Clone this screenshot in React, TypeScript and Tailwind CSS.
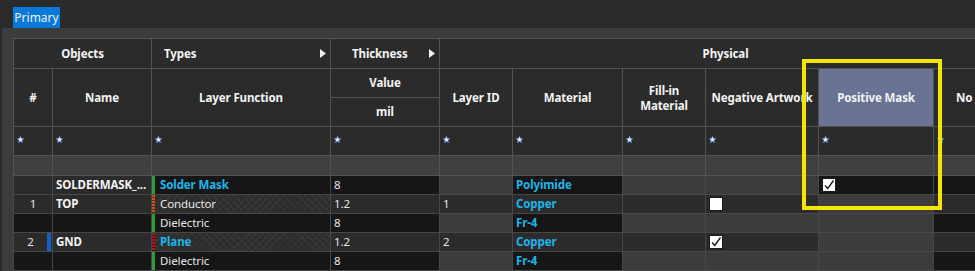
import React from "react";

const font = "font-['Noto_Sans',sans-serif]";

const cellBg: Record<string, string> = {
  dk: "bg-[#161616]",
  md: "bg-[#2b2b2b]",
  ro: "bg-[#3c3c3c]",
  hx: "bg-[#2b2b2b] [background-image:repeating-linear-gradient(45deg,#393939_0_1px,transparent_1px_5px),repeating-linear-gradient(-45deg,#393939_0_1px,transparent_1px_5px)]",
};

const Arrow = () => (
  <svg width="6" height="9" viewBox="0 0 6 9" className="shrink-0">
    <path d="M0 0 L6 4.5 L0 9 Z" fill="#f2f2f2" />
  </svg>
);

const Star = () => (
  <svg width="7" height="7" viewBox="0 0 10 10">
    <path
      d="M5 0.5 L6.3 3.6 L9.6 3.8 L7 6 L7.9 9.3 L5 7.5 L2.1 9.3 L3 6 L0.4 3.8 L3.7 3.6 Z"
      fill="#f4f6ff"
      stroke="#5b8fd8"
      strokeWidth="1"
    />
  </svg>
);

const Check = ({ on }: { on: boolean }) => (
  <div className="w-[14px] h-[14px] bg-white border border-[#1a1a1a] flex items-center justify-center">
    {on && (
      <svg width="12" height="12" viewBox="0 0 12 12">
        <path d="M2 6.5 L4.8 9.5 L10.5 1.5" fill="none" stroke="#111" strokeWidth="1.3" />
      </svg>
    )}
  </div>
);

type Row = {
  num: string;
  numBg: string;
  name: string;
  nameBg: string;
  bar?: "none" | "blue";
  lf: string;
  lfBold: boolean;
  lfBg: string;
  lfBar: "green" | "orange" | "red";
  th: string;
  thBg: string;
  lid: string;
  lidBg: string;
  mat: string;
  matBg: string;
  fillBg: string;
  neg: "none" | "off" | "on";
  negBg: string;
  pos: "none" | "on";
  posBg: string;
  noBg: string;
};

const rows: Row[] = [
  { num: "", numBg: "md", name: "SOLDERMASK_...", nameBg: "md", lf: "Solder Mask", lfBold: true, lfBg: "dk", lfBar: "green", th: "8", thBg: "dk", lid: "", lidBg: "ro", mat: "Polyimide", matBg: "dk", fillBg: "ro", neg: "none", negBg: "ro", pos: "on", posBg: "dk", noBg: "dk" },
  { num: "1", numBg: "md", name: "TOP", nameBg: "md", lf: "Conductor", lfBold: false, lfBg: "hx", lfBar: "orange", th: "1.2", thBg: "md", lid: "1", lidBg: "md", mat: "Copper", matBg: "md", fillBg: "md", neg: "off", negBg: "md", pos: "none", posBg: "ro", noBg: "md" },
  { num: "", numBg: "dk", name: "", nameBg: "dk", lf: "Dielectric", lfBold: false, lfBg: "dk", lfBar: "green", th: "8", thBg: "dk", lid: "", lidBg: "ro", mat: "Fr-4", matBg: "dk", fillBg: "ro", neg: "none", negBg: "ro", pos: "none", posBg: "ro", noBg: "dk" },
  { num: "2", numBg: "md", name: "GND", nameBg: "md", bar: "blue", lf: "Plane", lfBold: true, lfBg: "hx", lfBar: "red", th: "1.2", thBg: "md", lid: "2", lidBg: "md", mat: "Copper", matBg: "md", fillBg: "md", neg: "on", negBg: "md", pos: "none", posBg: "ro", noBg: "md" },
  { num: "", numBg: "dk", name: "", nameBg: "dk", lf: "Dielectric", lfBold: false, lfBg: "dk", lfBar: "green", th: "8", thBg: "dk", lid: "", lidBg: "ro", mat: "Fr-4", matBg: "dk", fillBg: "ro", neg: "none", negBg: "ro", pos: "none", posBg: "ro", noBg: "dk" },
];

const barClass: Record<string, string> = {
  green: "bg-[#2a9d3c]",
  orange: "[background-image:repeating-linear-gradient(180deg,#c4581c_0_2px,#5a2a10_2px_3px)]",
  red: "[background-image:repeating-linear-gradient(180deg,#b3161b_0_2px,#4a0a0c_2px_3px)]",
};

const hd = "border border-[#545454] bg-[#2b2b2b] text-[#f4f4f4] font-bold text-center align-middle p-0";
const bd = "border border-[#474747] p-0 align-middle";
const cyan = "text-[#1fb5e8] font-bold";

export default function App() {
  return (
    <div className={`w-[975px] h-[271px] overflow-hidden bg-[#2b2b2b] ${font} text-[11.5px] tracking-[-0.1px] leading-none`}>
      <div className="h-[28px] pl-[13px] pt-[7px]">
        <div className="w-[47px] h-[21px] bg-[#0a78d6] text-[#e9f2ff] text-[12px] tracking-normal flex items-center justify-center">
          Primary
        </div>
      </div>
      <div className="ml-[2px] h-[243px] bg-[#3c3c3c] pl-[11px] pt-[10px]">
        <div className="relative w-[962px] h-[233px] overflow-hidden">
          <table className="table-fixed border-collapse w-[998px]">
            <colgroup>
              <col className="w-[39px]" />
              <col className="w-[99px]" />
              <col className="w-[179px]" />
              <col className="w-[109px]" />
              <col className="w-[73px]" />
              <col className="w-[110px]" />
              <col className="w-[83px]" />
              <col className="w-[113px]" />
              <col className="w-[115px]" />
              <col className="w-[78px]" />
            </colgroup>
            <thead>
              <tr className="h-[30px]">
                <th colSpan={2} className={hd}>Objects</th>
                <th className={hd}>
                  <div className="flex items-center justify-between pl-[12px] pr-[4px]">
                    <span>Types</span>
                    <Arrow />
                  </div>
                </th>
                <th className={hd}>
                  <div className="flex items-center pl-[21px] pr-[4px]">
                    <span className="flex-1 text-left">Thickness</span>
                    <Arrow />
                  </div>
                </th>
                <th colSpan={6} className={hd}>Physical</th>
              </tr>
              <tr className="h-[29px]">
                <th rowSpan={2} className={hd}>#</th>
                <th rowSpan={2} className={hd}>Name</th>
                <th rowSpan={2} className={hd}>Layer Function</th>
                <th className={hd}>Value</th>
                <th rowSpan={2} className={hd}>Layer ID</th>
                <th rowSpan={2} className={hd}>Material</th>
                <th rowSpan={2} className={`${hd} leading-[15px]`}>Fill-in<br />Material</th>
                <th rowSpan={2} className={`${hd} whitespace-nowrap`}>Negative Artwork</th>
                <th rowSpan={2} className={`${hd} bg-[#6b7394]`}>Positive Mask</th>
                <th rowSpan={2} className={`${hd} text-left pl-[22px]`}>No</th>
              </tr>
              <tr className="h-[29px]">
                <th className={hd}>mil</th>
              </tr>
            </thead>
            <tbody>
              <tr className="h-[29px]">
                {Array.from({ length: 10 }).map((_, i) => (
                  <td key={i} className={`${bd} border-[#545454] bg-[#2b2b2b] align-top`}>
                    <div className="pl-[3px] pt-[9px] flex">
                      <Star />
                    </div>
                  </td>
                ))}
              </tr>
              <tr className="h-[20px]">
                {Array.from({ length: 10 }).map((_, i) => (
                  <td key={i} className={`${bd} border-[#545454] bg-[#404040]`} />
                ))}
              </tr>
              {rows.map((r, i) => (
                <tr key={i} className="h-[19px]">
                  <td className={`${bd} ${cellBg[r.numBg]}`}>
                    <div className="flex items-stretch h-[18px]">
                      <span className="flex-1 flex items-center justify-center text-[#e6e6e6]">{r.num}</span>
                      {r.bar === "blue" ? <div className="w-[4px] bg-[#1560c4] mr-[1px]" /> : null}
                    </div>
                  </td>
                  <td className={`${bd} ${cellBg[r.nameBg]} pl-[3px] text-[#f4f4f4] font-bold whitespace-nowrap`}>{r.name}</td>
                  <td className={`${bd} ${cellBg[r.lfBg]}`}>
                    <div className="flex items-stretch h-[18px]">
                      <div className={`w-[3px] ${barClass[r.lfBar]}`} />
                      <span className={`flex items-center pl-[5px] ${r.lfBold ? cyan : "text-[#e6e6e6]"}`}>{r.lf}</span>
                    </div>
                  </td>
                  <td className={`${bd} ${cellBg[r.thBg]} pl-[3px] text-[#e6e6e6]`}>{r.th}</td>
                  <td className={`${bd} ${cellBg[r.lidBg]} pl-[3px] text-[#e6e6e6]`}>{r.lid}</td>
                  <td className={`${bd} ${cellBg[r.matBg]} pl-[3px] ${cyan}`}>{r.mat}</td>
                  <td className={`${bd} ${cellBg[r.fillBg]}`} />
                  <td className={`${bd} ${cellBg[r.negBg]}`}>
                    {r.neg !== "none" && (
                      <div className="pl-[3px] flex">
                        <Check on={r.neg === "on"} />
                      </div>
                    )}
                  </td>
                  <td className={`${bd} ${cellBg[r.posBg]}`}>
                    {r.pos === "on" && (
                      <div className="pl-[3px] flex">
                        <Check on />
                      </div>
                    )}
                  </td>
                  <td className={`${bd} ${cellBg[r.noBg]}`} />
                </tr>
              ))}
            </tbody>
          </table>
          <div className="absolute left-[789px] top-[21px] w-[140px] h-[151px] border-[4px] border-[#f5e600]" />
        </div>
      </div>
    </div>
  );
}
